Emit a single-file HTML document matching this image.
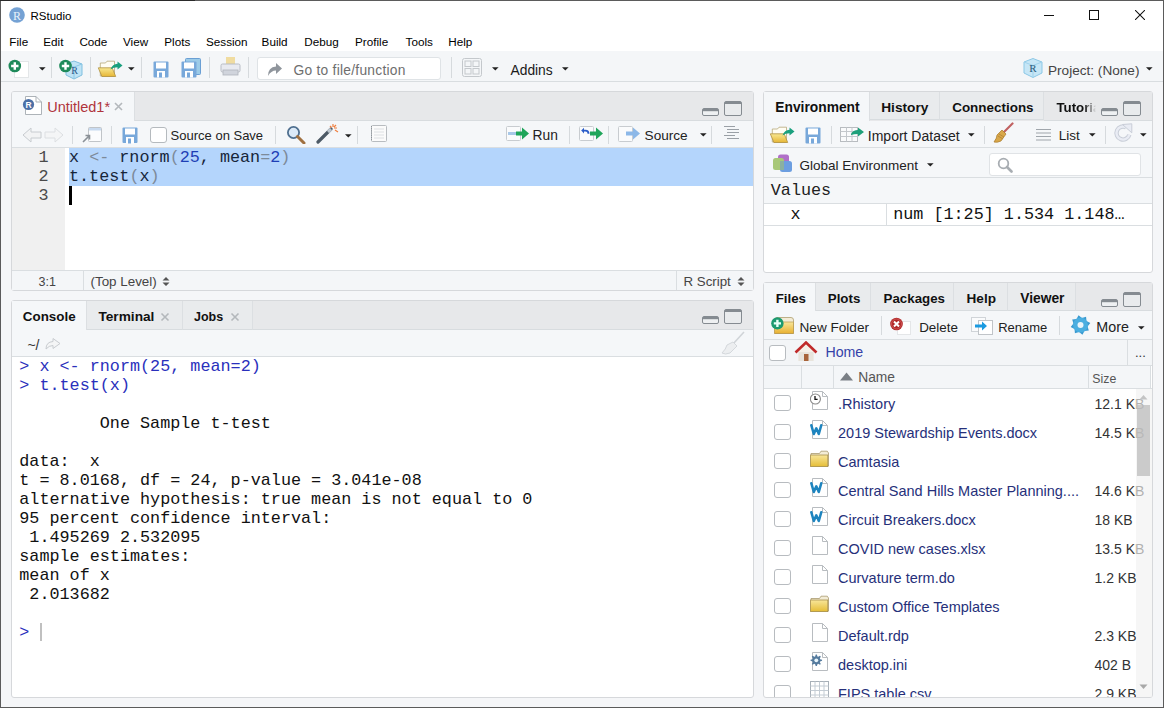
<!DOCTYPE html><html><head><meta charset="utf-8"><style>
*{margin:0;padding:0;box-sizing:border-box}
html,body{width:1164px;height:708px;overflow:hidden}
body{background:#5b5b5b;position:relative;font-family:"Liberation Sans",sans-serif}
.a{position:absolute}
.t{position:absolute;white-space:nowrap;line-height:1}
</style></head><body>
<div class="a" style="left:1px;top:1px;width:1162px;height:706px;background:#f5f6f8;"></div>
<div class="a" style="left:0px;top:0px;width:195px;height:1px;background:#2a2a2a;"></div>
<div class="a" style="left:1px;top:1px;width:1162px;height:50px;background:#ffffff;"></div>
<div class="a" style="left:1px;top:51px;width:1162px;height:30px;background:#f4f6f8;"></div>
<div class="a" style="left:1px;top:81px;width:1162px;height:1px;background:#d9dde0;"></div>
<svg class="a" style="left:9px;top:7px;" width="16" height="16" viewBox="0 0 16 16"><circle cx="8" cy="8" r="7.8" fill="#75a2d4"/><text x="8" y="12.5" font-family="Liberation Serif" font-size="12" fill="#e8f2fb" text-anchor="middle">R</text></svg>
<div class="t" style="left:30.5px;top:11.00px;font-size:11.5px;color:#000;font-weight:normal;font-family:'Liberation Sans';">RStudio</div>
<div class="a" style="left:1044px;top:15px;width:10px;height:1px;background:#111;"></div>
<div class="a" style="left:1089px;top:10px;width:10px;height:10px;border:1px solid #111"></div>
<svg class="a" style="left:1135px;top:10px;" width="10" height="10" viewBox="0 0 10 10"><path d="M0 0L10 10M10 0L0 10" stroke="#111" stroke-width="1.05"/></svg>
<div class="t" style="left:9.3px;top:36.00px;font-size:11.7px;color:#000;font-weight:normal;font-family:'Liberation Sans';">File</div>
<div class="t" style="left:43.3px;top:36.00px;font-size:11.7px;color:#000;font-weight:normal;font-family:'Liberation Sans';">Edit</div>
<div class="t" style="left:79.4px;top:36.00px;font-size:11.7px;color:#000;font-weight:normal;font-family:'Liberation Sans';">Code</div>
<div class="t" style="left:123px;top:36.00px;font-size:11.7px;color:#000;font-weight:normal;font-family:'Liberation Sans';">View</div>
<div class="t" style="left:164.3px;top:36.00px;font-size:11.7px;color:#000;font-weight:normal;font-family:'Liberation Sans';">Plots</div>
<div class="t" style="left:206px;top:36.00px;font-size:11.7px;color:#000;font-weight:normal;font-family:'Liberation Sans';">Session</div>
<div class="t" style="left:261.6px;top:36.00px;font-size:11.7px;color:#000;font-weight:normal;font-family:'Liberation Sans';">Build</div>
<div class="t" style="left:304.2px;top:36.00px;font-size:11.7px;color:#000;font-weight:normal;font-family:'Liberation Sans';">Debug</div>
<div class="t" style="left:355px;top:36.00px;font-size:11.7px;color:#000;font-weight:normal;font-family:'Liberation Sans';">Profile</div>
<div class="t" style="left:405.6px;top:36.00px;font-size:11.7px;color:#000;font-weight:normal;font-family:'Liberation Sans';">Tools</div>
<div class="t" style="left:448.2px;top:36.00px;font-size:11.7px;color:#000;font-weight:normal;font-family:'Liberation Sans';">Help</div>
<svg class="a" style="left:8px;top:58px;" width="24" height="22" viewBox="0 0 24 22"><rect x="6.5" y="3.5" width="14" height="16" fill="#fff" stroke="#e3e6e8"/><circle cx="6.8" cy="8" r="6.3" fill="#1e8a5a"/><path d="M6.8 4.3V11.7M3.1 8H10.5" stroke="#fff" stroke-width="2.4"/></svg>
<svg class="a" style="left:39px;top:67px;" width="7" height="4" viewBox="0 0 7 4"><path d="M0 0.2H6.6L3.3 3.6Z" fill="#222"/></svg>
<div class="a" style="left:51px;top:57px;width:1px;height:21px;background:#d6dadd;"></div>
<svg class="a" style="left:58px;top:57px;" width="26" height="24" viewBox="0 0 26 24"><path d="M8 7L16 4L24 7V18L16 22L8 18Z" fill="#bfe3f5" stroke="#7fbfdf" stroke-width="1"/><path d="M8 7L16 10L24 7M16 10V22" stroke="#8cc8e6" fill="none"/><text x="16.5" y="17" font-family="Liberation Serif" font-size="10" fill="#2a5a8a" text-anchor="middle">R</text><circle cx="7.5" cy="9" r="6.3" fill="#1e8a5a"/><path d="M7.5 5.3V12.7M3.8 9H11.2" stroke="#fff" stroke-width="2.4"/></svg>
<div class="a" style="left:90px;top:57px;width:1px;height:21px;background:#d6dadd;"></div>
<svg class="a" style="left:97px;top:58px;" width="27" height="21" viewBox="0 0 27 21"><defs><linearGradient id="ofg" x1="0" y1="0" x2="0" y2="1"><stop offset="0" stop-color="#f8e890"/><stop offset="1" stop-color="#e6b636"/></linearGradient></defs><path d="M3.3 18V5H8.5L10 3.2H17.5V18Z" fill="#fffdf3" stroke="#b8a878" stroke-width="0.8"/><path d="M1.3 9.8H15.2L18.7 18.5H4.9Z" fill="url(#ofg)" stroke="#b09040" stroke-width="0.8"/><path d="M13.5 11.5Q15.5 6 20.5 5.8V3.5L25.5 7.5L20.5 11.5V9.2Q16.5 9.2 13.5 11.5Z" fill="#1aa07e"/></svg>
<svg class="a" style="left:128px;top:67px;" width="7" height="4" viewBox="0 0 7 4"><path d="M0 0.2H6.6L3.3 3.6Z" fill="#222"/></svg>
<div class="a" style="left:141px;top:57px;width:1px;height:21px;background:#d6dadd;"></div>
<svg class="a" style="left:153px;top:61px;" width="17" height="18" viewBox="0 0 17 18"><rect x="0.5" y="0.5" width="15" height="16" rx="1" fill="#78a8da"/><rect x="3" y="1.5" width="10" height="6" fill="#fff"/><rect x="4" y="10" width="8" height="6.5" fill="#fff"/><rect x="6" y="11.5" width="3" height="5" fill="#78a8da"/></svg>
<svg class="a" style="left:181px;top:58px;" width="21" height="21" viewBox="0 0 21 21"><rect x="4.5" y="0.5" width="15" height="16" rx="1" fill="#9ccbe8" stroke="#6a9fd4"/><g transform="translate(0,3)"><rect x="0.5" y="0.5" width="15" height="16" rx="1" fill="#78a8da"/><rect x="3" y="1.5" width="10" height="6" fill="#fff"/><rect x="4" y="10" width="8" height="6.5" fill="#fff"/><rect x="6" y="11.5" width="3" height="5" fill="#78a8da"/></g></svg>
<div class="a" style="left:209px;top:57px;width:1px;height:21px;background:#d6dadd;"></div>
<svg class="a" style="left:220px;top:56px;" width="21" height="21" viewBox="0 0 21 21"><rect x="6" y="1" width="9" height="8" fill="#f0dca0"/><rect x="1" y="8" width="19" height="8" rx="1.5" fill="#e8eaf0" stroke="#b8bcc4"/><rect x="3" y="14" width="15" height="5" fill="#d0d4dc" stroke="#b0b4bc" stroke-width="0.8"/></svg>
<div class="a" style="left:248px;top:57px;width:1px;height:21px;background:#d6dadd;"></div>
<div class="a" style="left:257px;top:57px;width:184px;height:23px;background:#fff;border:1px solid #dfe3e6;border-radius:3px"></div>
<svg class="a" style="left:266px;top:61px;" width="18" height="16" viewBox="0 0 18 16"><path d="M2 15Q2 6 10 5.5V2L16 7.5L10 13V9.5Q5 9.5 2 15Z" fill="#8f959c"/></svg>
<div class="t" style="left:293.5px;top:64.00px;font-size:13.8px;color:#6e6e6e;font-weight:normal;font-family:'Liberation Sans';letter-spacing:0.25px">Go to file/function</div>
<div class="a" style="left:451px;top:57px;width:1px;height:21px;background:#d6dadd;"></div>
<svg class="a" style="left:462px;top:58px;" width="21" height="20" viewBox="0 0 21 20"><rect x="0.5" y="0.5" width="19" height="18" rx="2" fill="none" stroke="#c4c8cc"/><rect x="3" y="3" width="6" height="5.5" fill="none" stroke="#c4c8cc"/><rect x="11" y="3" width="6" height="5.5" fill="none" stroke="#c4c8cc"/><rect x="3" y="10.5" width="6" height="5.5" fill="none" stroke="#c4c8cc"/><rect x="11" y="10.5" width="6" height="5.5" fill="none" stroke="#c4c8cc"/></svg>
<svg class="a" style="left:492px;top:67px;" width="7" height="4" viewBox="0 0 7 4"><path d="M0 0.2H6.6L3.3 3.6Z" fill="#222"/></svg>
<div class="t" style="left:510.5px;top:64.00px;font-size:13.8px;color:#1a1a1a;font-weight:normal;font-family:'Liberation Sans';">Addins</div>
<svg class="a" style="left:562px;top:67px;" width="7" height="4" viewBox="0 0 7 4"><path d="M0 0.2H6.6L3.3 3.6Z" fill="#222"/></svg>
<svg class="a" style="left:1022px;top:57px;" width="22" height="22" viewBox="0 0 22 22"><path d="M2 5L11 1.5L20 5V16L11 20.5L2 16Z" fill="#c6e6f6" stroke="#8cc8e6"/><path d="M2 5L11 8.5L20 5M11 8.5V20.5" stroke="#9fd2ec" fill="none"/><text x="11" y="15" font-family="Liberation Serif" font-size="11" fill="#2a5a7a" text-anchor="middle">R</text></svg>
<div class="t" style="left:1048px;top:64.00px;font-size:13.6px;color:#444;font-weight:normal;font-family:'Liberation Sans';">Project: (None)</div>
<svg class="a" style="left:1146px;top:67px;" width="7" height="4" viewBox="0 0 7 4"><path d="M0 0.2H6.6L3.3 3.6Z" fill="#222"/></svg>
<div class="a" style="left:11px;top:91px;width:743px;height:200px;background:#fff;border:1px solid #d6d8db;border-radius:3px;overflow:hidden"></div>
<div class="a" style="left:12px;top:92px;width:741px;height:29px;background:#e7e8ea;"></div>
<div class="a" style="left:12px;top:121px;width:741px;height:26px;background:#f5f7f9;"></div>
<div class="a" style="left:12px;top:147px;width:741px;height:1px;background:#dadee1;"></div>
<div class="a" style="left:12px;top:92px;width:123px;height:29px;background:#f5f7f9;border-right:1px solid #dcdfe2;border-top-left-radius:2px"></div>
<svg class="a" style="left:22px;top:95px;" width="22" height="21" viewBox="0 0 22 21"><path d="M3.5 1.5H14L19.5 7V19.5H3.5Z" fill="#fff" stroke="#a4aab0" stroke-width="0.9"/><path d="M14 1.5V7H19.5" fill="none" stroke="#a4aab0" stroke-width="0.9"/><circle cx="6.5" cy="9.5" r="5.6" fill="#4b70a6"/><text x="6.5" y="12.6" font-family="Liberation Sans" font-weight="bold" font-size="8.5" fill="#fff" text-anchor="middle">R</text></svg>
<div class="t" style="left:47.2px;top:99.60px;font-size:14.5px;color:#b0343c;font-weight:normal;font-family:'Liberation Sans';">Untitled1*</div>
<svg class="a" style="left:114px;top:102px;" width="9" height="9" viewBox="0 0 9 9"><path d="M1 1L8 8M8 1L1 8" stroke="#b4b8bc" stroke-width="1.6"/></svg>
<svg class="a" style="left:702px;top:101px;" width="40" height="16" viewBox="0 0 40 16"><rect x="0.5" y="7.5" width="16" height="7" rx="1.5" fill="#eef0f2" stroke="#858b91"/><rect x="1" y="8" width="15" height="2.2" fill="#858b91"/><rect x="22.5" y="0.5" width="17" height="14" rx="1.5" fill="#e9ebed" stroke="#858b91"/><rect x="23" y="1" width="16" height="2" fill="#858b91"/></svg>
<div class="a" style="left:135px;top:120px;width:618px;height:1px;background:#d8dcdf;"></div>
<svg class="a" style="left:22px;top:126px;" width="42" height="18" viewBox="0 0 42 18"><path d="M1 9L9 2V6H19V12H9V16Z" fill="#f2f3f4" stroke="#c8ccd0"/><path d="M41 9L33 2V6H23V12H33V16Z" fill="#f4f5f6" stroke="#dcdfe2"/></svg>
<div class="a" style="left:72px;top:126px;width:1px;height:18px;background:#d6dadd;"></div>
<svg class="a" style="left:81px;top:126px;" width="22" height="18" viewBox="0 0 22 18"><rect x="7.5" y="1.5" width="13" height="14" rx="1" fill="#fbfcfd" stroke="#c0c4c8"/><rect x="8" y="2" width="12" height="2.5" fill="#c8daf0"/><path d="M2 16L8 10M4.5 9.5H8.5V13.5" stroke="#8a9096" stroke-width="1.6" fill="none"/></svg>
<div class="a" style="left:111px;top:126px;width:1px;height:18px;background:#d6dadd;"></div>
<svg class="a" style="left:122px;top:127px;" width="17" height="18" viewBox="0 0 17 18"><rect x="0.5" y="0.5" width="15" height="15.5" rx="1" fill="#78a8da"/><rect x="3" y="1.5" width="10" height="6" fill="#fff"/><rect x="4" y="10" width="8" height="6.5" fill="#fff"/><rect x="6" y="11.5" width="3" height="5" fill="#78a8da"/></svg>
<div class="a" style="left:150px;top:127px;width:17px;height:16px;background:#fff;border:1px solid #b5babe;border-radius:3px"></div>
<div class="t" style="left:170.6px;top:129.00px;font-size:13.0px;color:#222;font-weight:normal;font-family:'Liberation Sans';">Source on Save</div>
<div class="a" style="left:275px;top:126px;width:1px;height:18px;background:#d6dadd;"></div>
<svg class="a" style="left:286px;top:125px;" width="20" height="19" viewBox="0 0 20 19"><circle cx="7.5" cy="7.5" r="5.6" fill="#dbe9f7" stroke="#4f6f8f" stroke-width="1.8"/><path d="M11.5 11.5L18 18" stroke="#a07040" stroke-width="3" stroke-linecap="round"/></svg>
<svg class="a" style="left:316px;top:123px;" width="24" height="21" viewBox="0 0 24 21"><path d="M2 19L15 6" stroke="#4d5a66" stroke-width="3.2" stroke-linecap="round"/><path d="M12 9L15 6" stroke="#c0c8d0" stroke-width="3.2"/><path d="M17 1V4M21 5H18M20 2L18 4M14 3L15.5 4.5M22 9L19 7" stroke="#f08040" stroke-width="1.2"/></svg>
<svg class="a" style="left:345px;top:134px;" width="7" height="4" viewBox="0 0 7 4"><path d="M0 0.2H6.6L3.3 3.6Z" fill="#222"/></svg>
<div class="a" style="left:357px;top:126px;width:1px;height:18px;background:#d6dadd;"></div>
<svg class="a" style="left:369px;top:125px;" width="19" height="18" viewBox="0 0 19 18"><rect x="2.5" y="0.5" width="15" height="16" rx="1" fill="#fbfbfb" stroke="#b8bcc0"/><path d="M5 4H15M5 7H15M5 10H15M5 13H15" stroke="#dde0e3"/><path d="M2.5 1V16" stroke="#8a9096" stroke-dasharray="1 1.2"/></svg>
<svg class="a" style="left:506px;top:126px;" width="24" height="16" viewBox="0 0 24 16"><rect x="0.5" y="0.5" width="14" height="14" rx="1" fill="#fafbfc" stroke="#c8ccd0"/><rect x="2" y="6" width="10" height="3" fill="#a8c8e8"/><path d="M10 5.5H16V1.5L23 7.5L16 13.5V9.5H10Z" fill="#1fa55a"/></svg>
<div class="t" style="left:532.6px;top:129.20px;font-size:13.8px;color:#222;font-weight:normal;font-family:'Liberation Sans';">Run</div>
<div class="a" style="left:569px;top:126px;width:1px;height:18px;background:#d6dadd;"></div>
<svg class="a" style="left:579px;top:126px;" width="25" height="16" viewBox="0 0 25 16"><rect x="0.5" y="0.5" width="14" height="14" rx="1" fill="#fafbfc" stroke="#c8ccd0"/><path d="M5 1.8L2.2 4.6L5 7.4Z" fill="#2a5cc8"/><path d="M4 4.6H6.5Q9.5 4.6 9.5 7.8" stroke="#2a5cc8" stroke-width="1.9" fill="none"/><path d="M11 5.5H17V1.5L24 7.5L17 13.5V9.5H11Z" fill="#1fa55a"/></svg>
<div class="a" style="left:608px;top:126px;width:1px;height:18px;background:#d6dadd;"></div>
<svg class="a" style="left:618px;top:126px;" width="24" height="17" viewBox="0 0 24 17"><rect x="0.5" y="0.5" width="14" height="15" rx="1" fill="#fafbfc" stroke="#c8ccd0"/><path d="M8 5.5H15V1.5L22 7.5L15 13.5V9.5H8Z" fill="#8cb8e8"/></svg>
<div class="t" style="left:644.6px;top:129.20px;font-size:13.6px;color:#222;font-weight:normal;font-family:'Liberation Sans';">Source</div>
<svg class="a" style="left:700px;top:133px;" width="7" height="4" viewBox="0 0 7 4"><path d="M0 0.2H6.6L3.3 3.6Z" fill="#222"/></svg>
<div class="a" style="left:711px;top:126px;width:1px;height:18px;background:#d6dadd;"></div>
<svg class="a" style="left:723px;top:125px;" width="18" height="14" viewBox="0 0 18 14"><path d="M1 1.5H12M4 4.5H16M4 7.5H16M1 10.5H12M4 13.5H16" stroke="#9aa0a6" stroke-width="1"/></svg>
<div class="a" style="left:12px;top:148px;width:53px;height:122px;background:#f0f0f0;"></div>
<div class="a" style="left:69px;top:148px;width:684px;height:38px;background:#b4d5fc;"></div>
<div class="a" style="left:69px;top:186px;width:3px;height:19px;background:#000;"></div>
<div class="t" style="left:38.5px;top:150.30px;font-size:16.77px;color:#4a4a4a;font-weight:normal;font-family:'Liberation Mono';">1</div>
<div class="t" style="left:38.5px;top:169.30px;font-size:16.77px;color:#4a4a4a;font-weight:normal;font-family:'Liberation Mono';">2</div>
<div class="t" style="left:38.5px;top:188.30px;font-size:16.77px;color:#4a4a4a;font-weight:normal;font-family:'Liberation Mono';">3</div>
<div class="t" style="left:69px;top:150.30px;font-size:16.77px;color:#000;font-weight:normal;font-family:'Liberation Mono';"><span style="color:#17263a">x </span><span style="color:#7d8a99">&lt;-</span><span style="color:#17263a"> rnorm</span><span style="color:#7d8a99">(</span><span style="color:#1f3fb5">25</span><span style="color:#17263a">, mean</span><span style="color:#7d8a99">=</span><span style="color:#1f3fb5">2</span><span style="color:#7d8a99">)</span></div>
<div class="t" style="left:69px;top:169.30px;font-size:16.77px;color:#000;font-weight:normal;font-family:'Liberation Mono';"><span style="color:#17263a">t.test</span><span style="color:#7d8a99">(</span><span style="color:#17263a">x</span><span style="color:#7d8a99">)</span></div>
<div class="a" style="left:12px;top:270px;width:741px;height:20px;background:#f4f6f8;"></div>
<div class="a" style="left:12px;top:270px;width:741px;height:1px;background:#dadee1;"></div>
<div class="t" style="left:38.6px;top:275.70px;font-size:12.5px;color:#444;font-weight:normal;font-family:'Liberation Sans';">3:1</div>
<div class="a" style="left:83px;top:271px;width:1px;height:19px;background:#dadee1;"></div>
<div class="t" style="left:90.5px;top:274.70px;font-size:13.4px;color:#444;font-weight:normal;font-family:'Liberation Sans';">(Top Level)</div>
<svg class="a" style="left:162px;top:276px;" width="8" height="11" viewBox="0 0 8 11"><path d="M0.5 4.5L4 1L7.5 4.5ZM0.5 6.5L4 10L7.5 6.5Z" fill="#555"/></svg>
<div class="a" style="left:676px;top:271px;width:1px;height:19px;background:#dadee1;"></div>
<div class="t" style="left:683.5px;top:274.70px;font-size:13.3px;color:#444;font-weight:normal;font-family:'Liberation Sans';">R Script</div>
<svg class="a" style="left:737px;top:276px;" width="8" height="11" viewBox="0 0 8 11"><path d="M0.5 4.5L4 1L7.5 4.5ZM0.5 6.5L4 10L7.5 6.5Z" fill="#555"/></svg>
<div class="a" style="left:11px;top:300px;width:743px;height:398px;background:#fff;border:1px solid #d6d8db;border-radius:3px;overflow:hidden"></div>
<div class="a" style="left:12px;top:301px;width:741px;height:29px;background:#e7e8ea;"></div>
<div class="a" style="left:12px;top:330px;width:741px;height:26px;background:#f5f7f9;"></div>
<div class="a" style="left:12px;top:356px;width:741px;height:1px;background:#dadee1;"></div>
<div class="a" style="left:12px;top:301px;width:75px;height:29px;background:#f5f7f9;border-right:1px solid #dcdfe2"></div>
<div class="a" style="left:87px;top:301px;width:96px;height:29px;background:#e9ebed;border-right:1px solid #dcdfe2;border-bottom:1px solid #d8dcdf"></div>
<div class="a" style="left:183px;top:301px;width:70px;height:29px;background:#e9ebed;border-right:1px solid #dcdfe2;border-bottom:1px solid #d8dcdf"></div>
<div class="a" style="left:253px;top:329px;width:500px;height:1px;background:#d8dcdf;"></div>
<div class="t" style="left:22.8px;top:309.80px;font-size:13.4px;color:#111;font-weight:bold;font-family:'Liberation Sans';">Console</div>
<div class="t" style="left:98.4px;top:309.80px;font-size:13.7px;color:#111;font-weight:bold;font-family:'Liberation Sans';">Terminal</div>
<svg class="a" style="left:160px;top:312px;" width="10" height="10" viewBox="0 0 10 10"><path d="M1.5 1.5L8.5 8.5M8.5 1.5L1.5 8.5" stroke="#b4b8bc" stroke-width="1.6"/></svg>
<div class="t" style="left:194px;top:310.80px;font-size:12.5px;color:#111;font-weight:bold;font-family:'Liberation Sans';">Jobs</div>
<svg class="a" style="left:229.5px;top:312px;" width="10" height="10" viewBox="0 0 10 10"><path d="M1.5 1.5L8.5 8.5M8.5 1.5L1.5 8.5" stroke="#b4b8bc" stroke-width="1.6"/></svg>
<svg class="a" style="left:702px;top:309px;" width="40" height="16" viewBox="0 0 40 16"><rect x="0.5" y="7.5" width="16" height="7" rx="1.5" fill="#eef0f2" stroke="#858b91"/><rect x="1" y="8" width="15" height="2.2" fill="#858b91"/><rect x="22.5" y="0.5" width="17" height="14" rx="1.5" fill="#e9ebed" stroke="#858b91"/><rect x="23" y="1" width="16" height="2" fill="#858b91"/></svg>
<div class="t" style="left:27.5px;top:337.50px;font-size:14px;color:#333;font-weight:normal;font-family:'Liberation Sans';">~</div>
<div class="t" style="left:35.6px;top:337.50px;font-size:14px;color:#333;font-weight:normal;font-family:'Liberation Sans';">/</div>
<svg class="a" style="left:45px;top:337px;" width="17" height="13" viewBox="0 0 17 13"><path d="M1 12Q1 5 8 4.5V1.5L15 6.5L8 11.5V8.5Q4 8.5 1 12Z" fill="#f4f5f6" stroke="#c8ccd0"/></svg>
<svg class="a" style="left:720px;top:331px;" width="26" height="24" viewBox="0 0 26 24"><path d="M24 1L13 13" stroke="#d0d4d8" stroke-width="1.6"/><path d="M13 11L17 15L10 22Q5 24 2 22Q6 18 7 14Z" fill="#eceef0" stroke="#d4d8dc"/></svg>
<div class="t" style="left:19.3px;top:359.30px;font-size:16.77px;color:#111;font-weight:normal;font-family:'Liberation Mono';"><span style="color:#2a30bc">&gt;&nbsp;x&nbsp;&lt;-&nbsp;rnorm(25,&nbsp;mean=2)</span></div>
<div class="t" style="left:19.3px;top:378.30px;font-size:16.77px;color:#111;font-weight:normal;font-family:'Liberation Mono';"><span style="color:#2a30bc">&gt;&nbsp;t.test(x)</span></div>
<div class="t" style="left:19.3px;top:416.30px;font-size:16.77px;color:#111;font-weight:normal;font-family:'Liberation Mono';">&nbsp;&nbsp;&nbsp;&nbsp;&nbsp;&nbsp;&nbsp;&nbsp;One&nbsp;Sample&nbsp;t-test</div>
<div class="t" style="left:19.3px;top:454.30px;font-size:16.77px;color:#111;font-weight:normal;font-family:'Liberation Mono';">data:&nbsp;&nbsp;x</div>
<div class="t" style="left:19.3px;top:473.30px;font-size:16.77px;color:#111;font-weight:normal;font-family:'Liberation Mono';">t&nbsp;=&nbsp;8.0168,&nbsp;df&nbsp;=&nbsp;24,&nbsp;p-value&nbsp;=&nbsp;3.041e-08</div>
<div class="t" style="left:19.3px;top:492.30px;font-size:16.77px;color:#111;font-weight:normal;font-family:'Liberation Mono';">alternative&nbsp;hypothesis:&nbsp;true&nbsp;mean&nbsp;is&nbsp;not&nbsp;equal&nbsp;to&nbsp;0</div>
<div class="t" style="left:19.3px;top:511.30px;font-size:16.77px;color:#111;font-weight:normal;font-family:'Liberation Mono';">95&nbsp;percent&nbsp;confidence&nbsp;interval:</div>
<div class="t" style="left:19.3px;top:530.30px;font-size:16.77px;color:#111;font-weight:normal;font-family:'Liberation Mono';">&nbsp;1.495269&nbsp;2.532095</div>
<div class="t" style="left:19.3px;top:549.30px;font-size:16.77px;color:#111;font-weight:normal;font-family:'Liberation Mono';">sample&nbsp;estimates:</div>
<div class="t" style="left:19.3px;top:568.30px;font-size:16.77px;color:#111;font-weight:normal;font-family:'Liberation Mono';">mean&nbsp;of&nbsp;x</div>
<div class="t" style="left:19.3px;top:587.30px;font-size:16.77px;color:#111;font-weight:normal;font-family:'Liberation Mono';">&nbsp;2.013682</div>
<div class="t" style="left:19.3px;top:625.30px;font-size:16.77px;color:#111;font-weight:normal;font-family:'Liberation Mono';"><span style="color:#2a30bc">&gt;&nbsp;</span></div>
<div class="a" style="left:40px;top:623px;width:2px;height:18px;background:#c0c0c0;"></div>
<div class="a" style="left:763px;top:91px;width:390px;height:182px;background:#fff;border:1px solid #d6d8db;border-radius:3px;overflow:hidden"></div>
<div class="a" style="left:764px;top:92px;width:388px;height:29px;background:#e7e8ea;"></div>
<div class="a" style="left:764px;top:121px;width:388px;height:27px;background:#f5f7f9;"></div>
<div class="a" style="left:764px;top:147px;width:388px;height:1px;background:#dadee1;"></div>
<div class="a" style="left:764px;top:148px;width:388px;height:29px;background:#f5f7f9;"></div>
<div class="a" style="left:764px;top:177px;width:388px;height:1px;background:#dadee1;"></div>
<div class="a" style="left:764px;top:178px;width:388px;height:25px;background:#f5f7f9;"></div>
<div class="a" style="left:764px;top:203px;width:388px;height:1px;background:#dadee1;"></div>
<div class="a" style="left:764px;top:225px;width:388px;height:1px;background:#dadee1;"></div>
<div class="a" style="left:886px;top:204px;width:1px;height:21px;background:#dadee1;"></div>
<div class="a" style="left:764px;top:92px;width:106px;height:29px;background:#f5f7f9;border-right:1px solid #dcdfe2"></div>
<div class="a" style="left:870px;top:92px;width:70px;height:28px;background:#e9ebed;border-right:1px solid #dcdfe2;border-bottom:1px solid #d8dcdf"></div>
<div class="a" style="left:940px;top:92px;width:104px;height:28px;background:#e9ebed;border-right:1px solid #dcdfe2;border-bottom:1px solid #d8dcdf"></div>
<div class="a" style="left:1044px;top:120px;width:108px;height:1px;background:#d8dcdf;"></div>
<div class="t" style="left:775.3px;top:101.00px;font-size:13.8px;color:#111;font-weight:bold;font-family:'Liberation Sans';">Environment</div>
<div class="t" style="left:881.2px;top:101.00px;font-size:13.7px;color:#111;font-weight:bold;font-family:'Liberation Sans';">History</div>
<div class="t" style="left:952.2px;top:101.00px;font-size:13.45px;color:#111;font-weight:bold;font-family:'Liberation Sans';">Connections</div>
<div class="t" style="left:1056.4px;top:100.74px;font-size:13.3px;font-weight:bold;color:#111;width:40px;overflow:hidden;-webkit-mask-image:linear-gradient(90deg,#000 70%,transparent 100%)">Tutorials</div>
<svg class="a" style="left:1101px;top:101px;" width="40" height="16" viewBox="0 0 40 16"><rect x="0.5" y="7.5" width="16" height="7" rx="1.5" fill="#eef0f2" stroke="#858b91"/><rect x="1" y="8" width="15" height="2.2" fill="#858b91"/><rect x="22.5" y="0.5" width="17" height="14" rx="1.5" fill="#e9ebed" stroke="#858b91"/><rect x="23" y="1" width="16" height="2" fill="#858b91"/></svg>
<svg class="a" style="left:769px;top:124px;" width="27" height="21" viewBox="0 0 27 21"><defs><linearGradient id="ofg2" x1="0" y1="0" x2="0" y2="1"><stop offset="0" stop-color="#f8e890"/><stop offset="1" stop-color="#e6b636"/></linearGradient></defs><path d="M3.3 18V5H8.5L10 3.2H17.5V18Z" fill="#fffdf3" stroke="#b8a878" stroke-width="0.8"/><path d="M1.3 9.8H15.2L18.7 18.5H4.9Z" fill="url(#ofg2)" stroke="#b09040" stroke-width="0.8"/><path d="M13.5 11.5Q15.5 6 20.5 5.8V3.5L25.5 7.5L20.5 11.5V9.2Q16.5 9.2 13.5 11.5Z" fill="#1aa07e"/></svg>
<svg class="a" style="left:805px;top:127px;" width="17" height="18" viewBox="0 0 17 18"><rect x="0.5" y="0.5" width="15" height="16" rx="1" fill="#78a8da"/><rect x="3" y="1.5" width="10" height="6" fill="#fff"/><rect x="4" y="10" width="8" height="6.5" fill="#fff"/><rect x="6" y="11.5" width="3" height="5" fill="#78a8da"/></svg>
<div class="a" style="left:831px;top:126px;width:1px;height:18px;background:#d6dadd;"></div>
<svg class="a" style="left:840px;top:127px;" width="26" height="16" viewBox="0 0 26 16"><rect x="0.5" y="0.5" width="17" height="14" fill="#fafbfc" stroke="#b8bcc0"/><path d="M0.5 4.5H17.5M0.5 9.5H17.5M6.5 0.5V14.5M12 0.5V14.5" stroke="#c4c8cc"/><path d="M11 7Q13 3 18 3V0.5L24 5L18 9.5V7Q14 7 11 8Z" fill="#1ea07a"/></svg>
<div class="t" style="left:867.8px;top:128.55px;font-size:14.0px;color:#222;font-weight:normal;font-family:'Liberation Sans';">Import Dataset</div>
<svg class="a" style="left:968px;top:133px;" width="7" height="4" viewBox="0 0 7 4"><path d="M0 0.2H6.6L3.3 3.6Z" fill="#222"/></svg>
<div class="a" style="left:984px;top:126px;width:1px;height:18px;background:#d6dadd;"></div>
<svg class="a" style="left:993px;top:122px;" width="21" height="21" viewBox="0 0 21 21"><path d="M19.5 1.5L11 10" stroke="#c06060" stroke-width="2.2" stroke-linecap="round"/><path d="M9 8L13 12L8 19Q4 21 1 20Q4 16 4 13Z" fill="#d9a84a" stroke="#a8782a" stroke-width="0.7"/><path d="M5 14L10 17M6 12L11 15" stroke="#a8782a" stroke-width="0.6"/></svg>
<svg class="a" style="left:1036px;top:128px;" width="16" height="14" viewBox="0 0 16 14"><path d="M0 1.5H15M0 5H15M0 8.5H15M0 12H15" stroke="#a0a6ac" stroke-width="1.1"/></svg>
<div class="t" style="left:1058.8px;top:129.40px;font-size:13.5px;color:#222;font-weight:normal;font-family:'Liberation Sans';">List</div>
<svg class="a" style="left:1089px;top:133px;" width="7" height="4" viewBox="0 0 7 4"><path d="M0 0.2H6.6L3.3 3.6Z" fill="#222"/></svg>
<div class="a" style="left:1105px;top:126px;width:1px;height:18px;background:#d6dadd;"></div>
<svg class="a" style="left:1113px;top:122px;" width="21" height="22" viewBox="0 0 21 22"><path d="M16.3 12.7A6.5 6.5 0 1 1 13.2 5.4" fill="none" stroke="#c9ced8" stroke-width="4.4"/><path d="M16.3 12.7A6.5 6.5 0 1 1 13.2 5.4" fill="none" stroke="#e9ecf4" stroke-width="2.4"/><path d="M9.5 2.5L18.8 1.8L18.8 10.8Z" fill="#e9ecf4" stroke="#c9ced8" stroke-width="1"/></svg>
<svg class="a" style="left:1140px;top:133px;" width="7" height="4" viewBox="0 0 7 4"><path d="M0 0.2H6.6L3.3 3.6Z" fill="#222"/></svg>
<svg class="a" style="left:772px;top:154px;" width="22" height="19" viewBox="0 0 22 19"><rect x="6" y="0.5" width="11" height="11" rx="2.5" fill="#b070c8"/><rect x="1" y="4" width="11" height="12" rx="2.5" fill="#a8c878"/><rect x="8" y="7" width="12" height="11" rx="2.5" fill="#6c9ee0"/><rect x="8" y="7" width="4" height="9" fill="#8ab0a0"/></svg>
<div class="t" style="left:799.5px;top:159.00px;font-size:13.5px;color:#222;font-weight:normal;font-family:'Liberation Sans';">Global Environment</div>
<svg class="a" style="left:927px;top:163px;" width="7" height="4" viewBox="0 0 7 4"><path d="M0 0.2H6.6L3.3 3.6Z" fill="#222"/></svg>
<div class="a" style="left:989px;top:153px;width:152px;height:23px;background:#fff;border:1px solid #e0e3e6;border-radius:3px"></div>
<svg class="a" style="left:997px;top:157px;" width="18" height="16" viewBox="0 0 18 16"><circle cx="6.5" cy="6.5" r="4.8" fill="none" stroke="#a8adb2" stroke-width="1.8"/><path d="M10 10L14.5 14.5" stroke="#a8adb2" stroke-width="2.6" stroke-linecap="round"/></svg>
<div class="t" style="left:770.8px;top:182.80px;font-size:16.77px;color:#222;font-weight:normal;font-family:'Liberation Mono';">Values</div>
<div class="t" style="left:790.5px;top:207.00px;font-size:16.77px;color:#111;font-weight:normal;font-family:'Liberation Mono';">x</div>
<div class="t" style="left:893.2px;top:207.00px;font-size:16.77px;color:#111;font-weight:normal;font-family:'Liberation Mono';">num&nbsp;[1:25]&nbsp;1.534&nbsp;1.148…</div>
<div class="a" style="left:763px;top:282px;width:390px;height:416px;background:#fff;border:1px solid #d6d8db;border-radius:3px;overflow:hidden"></div>
<div class="a" style="left:764px;top:283px;width:388px;height:28px;background:#e7e8ea;"></div>
<div class="a" style="left:764px;top:311px;width:388px;height:28px;background:#f5f7f9;"></div>
<div class="a" style="left:764px;top:339px;width:388px;height:1px;background:#dadee1;"></div>
<div class="a" style="left:764px;top:340px;width:388px;height:25px;background:#f3f5f7;"></div>
<div class="a" style="left:764px;top:365px;width:388px;height:1px;background:#dadee1;"></div>
<div class="a" style="left:764px;top:366px;width:387px;height:22px;background:#f4f6f8;"></div>
<div class="a" style="left:764px;top:388px;width:388px;height:1px;background:#dadee1;"></div>
<div class="a" style="left:1127px;top:340px;width:1px;height:25px;background:#dadee1;"></div>
<div class="a" style="left:801px;top:366px;width:1px;height:22px;background:#dadee1;"></div>
<div class="a" style="left:833px;top:366px;width:1px;height:22px;background:#dadee1;"></div>
<div class="a" style="left:1088px;top:366px;width:1px;height:22px;background:#dadee1;"></div>
<div class="a" style="left:1150px;top:366px;width:1px;height:22px;background:#dadee1;"></div>
<div class="a" style="left:764px;top:283px;width:52px;height:28px;background:#f5f7f9;border-right:1px solid #dcdfe2"></div>
<div class="a" style="left:816px;top:283px;width:55px;height:28px;background:#e9ebed;border-right:1px solid #dcdfe2;border-bottom:1px solid #d8dcdf"></div>
<div class="a" style="left:871px;top:283px;width:83px;height:28px;background:#e9ebed;border-right:1px solid #dcdfe2;border-bottom:1px solid #d8dcdf"></div>
<div class="a" style="left:954px;top:283px;width:54px;height:28px;background:#e9ebed;border-right:1px solid #dcdfe2;border-bottom:1px solid #d8dcdf"></div>
<div class="a" style="left:1008px;top:283px;width:68px;height:28px;background:#e9ebed;border-right:1px solid #dcdfe2;border-bottom:1px solid #d8dcdf"></div>
<div class="a" style="left:1076px;top:310px;width:76px;height:1px;background:#d8dcdf;"></div>
<div class="t" style="left:775.7px;top:291.70px;font-size:13.3px;color:#111;font-weight:bold;font-family:'Liberation Sans';">Files</div>
<div class="t" style="left:827.8px;top:291.70px;font-size:13.3px;color:#111;font-weight:bold;font-family:'Liberation Sans';">Plots</div>
<div class="t" style="left:883.6px;top:291.70px;font-size:13.3px;color:#111;font-weight:bold;font-family:'Liberation Sans';">Packages</div>
<div class="t" style="left:966.5px;top:291.70px;font-size:13.6px;color:#111;font-weight:bold;font-family:'Liberation Sans';">Help</div>
<div class="t" style="left:1020.2px;top:291.70px;font-size:13.8px;color:#111;font-weight:bold;font-family:'Liberation Sans';">Viewer</div>
<svg class="a" style="left:1101px;top:292px;" width="40" height="16" viewBox="0 0 40 16"><rect x="0.5" y="7.5" width="16" height="7" rx="1.5" fill="#eef0f2" stroke="#858b91"/><rect x="1" y="8" width="15" height="2.2" fill="#858b91"/><rect x="22.5" y="0.5" width="17" height="14" rx="1.5" fill="#e9ebed" stroke="#858b91"/><rect x="23" y="1" width="16" height="2" fill="#858b91"/></svg>
<svg class="a" style="left:770px;top:316px;" width="25" height="19" viewBox="0 0 25 19"><defs><linearGradient id="nfg" x1="0" y1="0" x2="0" y2="1"><stop offset="0" stop-color="#f8e69a"/><stop offset="1" stop-color="#e8b030"/></linearGradient></defs><path d="M5 3.5Q5 1.5 7 1.5H21Q23.5 1.5 23.5 4V17.5H5Z" fill="#f3ecd6" stroke="#b0a070" stroke-width="0.8"/><rect x="4.5" y="6" width="19" height="11.5" fill="url(#nfg)" stroke="#b8984c" stroke-width="0.7"/><circle cx="7.4" cy="7.4" r="6.2" fill="#1c9a70"/><path d="M7.4 3.8V11M3.8 7.4H11" stroke="#e8fff8" stroke-width="2.4"/></svg>
<div class="t" style="left:799.5px;top:320.50px;font-size:13.6px;color:#222;font-weight:normal;font-family:'Liberation Sans';">New Folder</div>
<div class="a" style="left:881px;top:316px;width:1px;height:19px;background:#d6dadd;"></div>
<svg class="a" style="left:889px;top:317px;" width="23" height="18" viewBox="0 0 23 18"><rect x="8.5" y="4.5" width="13" height="13" fill="#fff" stroke="#e4e6e8"/><circle cx="7.5" cy="7" r="6.3" fill="#b02828"/><circle cx="7.5" cy="7" r="5" fill="none" stroke="#e07070" stroke-width="0.6"/><path d="M5 4.5L10 9.5M10 4.5L5 9.5" stroke="#fff" stroke-width="2"/></svg>
<div class="t" style="left:919.2px;top:320.70px;font-size:13.4px;color:#222;font-weight:normal;font-family:'Liberation Sans';">Delete</div>
<svg class="a" style="left:971px;top:317px;" width="23" height="18" viewBox="0 0 23 18"><rect x="0.5" y="0.5" width="14" height="14" fill="#fafbfc" stroke="#d0d4d8"/><rect x="7.5" y="3.5" width="14" height="14" fill="#fff" stroke="#c0c4c8"/><path d="M4 7.5H11V4.5L16 9L11 13.5V10.5H4Z" fill="#1a9ae0"/></svg>
<div class="t" style="left:998.2px;top:320.70px;font-size:13.0px;color:#222;font-weight:normal;font-family:'Liberation Sans';">Rename</div>
<div class="a" style="left:1059px;top:316px;width:1px;height:19px;background:#d6dadd;"></div>
<svg class="a" style="left:1070px;top:315px;" width="21" height="21" viewBox="0 0 21 21"><polygon points="20.31,8.05 17.56,11.40 18.81,15.56 14.50,15.99 12.45,19.81 9.10,17.06 4.94,18.31 4.51,14.00 0.69,11.95 3.44,8.60 2.19,4.44 6.50,4.01 8.55,0.19 11.90,2.94 16.06,1.69 16.49,6.00" fill="#3a9ad0"/><circle cx="10.5" cy="10" r="7.5" fill="#4aaee0"/><circle cx="10.5" cy="10" r="3" fill="#e8f4fa"/></svg>
<div class="t" style="left:1096.3px;top:319.70px;font-size:14.3px;color:#222;font-weight:normal;font-family:'Liberation Sans';">More</div>
<svg class="a" style="left:1137.5px;top:325.5px;" width="7" height="4" viewBox="0 0 7 4"><path d="M0 0.2H6.6L3.3 3.6Z" fill="#222"/></svg>
<div class="a" style="left:769px;top:345px;width:17px;height:16px;background:#fff;border:1px solid #b8bcc0;border-radius:3px"></div>
<svg class="a" style="left:794px;top:341px;" width="24" height="21" viewBox="0 0 24 21"><path d="M12 1.5L1.5 11.5H4.5V20H19.5V11.5H22.5Z" fill="#f4f0e8"/><path d="M1.5 11.5L12 1.5L22.5 11.5" fill="none" stroke="#c02a2a" stroke-width="2.6" stroke-linejoin="miter"/><rect x="4.5" y="11" width="15" height="9" fill="#e8e4dc"/><rect x="10" y="13" width="4.5" height="7" fill="#a8643a"/></svg>
<div class="t" style="left:825.4px;top:344.50px;font-size:14.2px;color:#3442a8;font-weight:normal;font-family:'Liberation Sans';">Home</div>
<div class="t" style="left:1135px;top:346.00px;font-size:13px;color:#333;font-weight:normal;font-family:'Liberation Sans';">...</div>
<svg class="a" style="left:840px;top:372px;" width="13" height="9" viewBox="0 0 13 9"><path d="M0 8.5L6.5 0.5L13 8.5Z" fill="#7a7f85"/></svg>
<div class="t" style="left:858.2px;top:371.20px;font-size:13.8px;color:#555;font-weight:normal;font-family:'Liberation Sans';">Name</div>
<div class="t" style="left:1092.3px;top:372.50px;font-size:12.3px;color:#555;font-weight:normal;font-family:'Liberation Sans';">Size</div>
<div class="a" style="left:764px;top:389px;width:388px;height:308px;overflow:hidden">
<div class="a" style="left:10px;top:6px;width:17px;height:16px;background:#fff;border:1px solid #b8bcc0;border-radius:3px"></div>
<svg class="a" style="left:46px;top:2px;" width="20" height="20" viewBox="0 0 20 20"><path d="M2.5 0.5H12.5L17.5 5.5V18.5H2.5Z" fill="#fff" stroke="#b8bcc0"/><path d="M12.5 0.5V5.5H17.5" fill="none" stroke="#b8bcc0"/><circle cx="5.4" cy="8" r="5" fill="#fff" stroke="#8a8a8a" stroke-width="1.1"/><path d="M5 5V8.4H7.6" stroke="#111" stroke-width="1.3" fill="none"/></svg>
<div class="t" style="left:74.0px;top:7.60px;font-size:14.5px;color:#26307a;font-weight:normal;font-family:'Liberation Sans';">.Rhistory</div>
<div class="t" style="left:330.5px;top:7.75px;font-size:14.0px;color:#333;font-weight:normal;font-family:'Liberation Sans';">12.1 KB</div>
<div class="a" style="left:10px;top:35px;width:17px;height:16px;background:#fff;border:1px solid #b8bcc0;border-radius:3px"></div>
<svg class="a" style="left:46px;top:31px;" width="20" height="20" viewBox="0 0 20 20"><path d="M2.5 0.5H12.5L17.5 5.5V18.5H2.5Z" fill="#fff" stroke="#b8bcc0"/><path d="M12.5 0.5V5.5H17.5" fill="none" stroke="#b8bcc0"/><path d="M1.3 5.2L3.8 14L6.3 8.3L8.8 14L11.3 5.2" fill="none" stroke="#1d84bf" stroke-width="2.5" stroke-linejoin="round" stroke-linecap="round"/></svg>
<div class="t" style="left:74.0px;top:36.60px;font-size:14.5px;color:#26307a;font-weight:normal;font-family:'Liberation Sans';">2019 Stewardship Events.docx</div>
<div class="t" style="left:330.5px;top:36.75px;font-size:14.0px;color:#333;font-weight:normal;font-family:'Liberation Sans';">14.5 KB</div>
<div class="a" style="left:10px;top:64px;width:17px;height:16px;background:#fff;border:1px solid #b8bcc0;border-radius:3px"></div>
<svg class="a" style="left:46px;top:61px;" width="20" height="18" viewBox="0 0 20 18"><defs><linearGradient id="fg1" x1="0" y1="0" x2="0" y2="1"><stop offset="0" stop-color="#f8e69a"/><stop offset="1" stop-color="#e5bd36"/></linearGradient></defs><path d="M1 3.5H9.5L11 1.2H17.3L18.5 3V16H1Z" fill="#f3ecd6" stroke="#a99a70" stroke-width="0.8"/><rect x="0.6" y="5" width="17.2" height="11.6" fill="url(#fg1)" stroke="#a8904c" stroke-width="0.8"/></svg>
<div class="t" style="left:74.0px;top:65.60px;font-size:14.5px;color:#26307a;font-weight:normal;font-family:'Liberation Sans';">Camtasia</div>
<div class="a" style="left:10px;top:93px;width:17px;height:16px;background:#fff;border:1px solid #b8bcc0;border-radius:3px"></div>
<svg class="a" style="left:46px;top:89px;" width="20" height="20" viewBox="0 0 20 20"><path d="M2.5 0.5H12.5L17.5 5.5V18.5H2.5Z" fill="#fff" stroke="#b8bcc0"/><path d="M12.5 0.5V5.5H17.5" fill="none" stroke="#b8bcc0"/><path d="M1.3 5.2L3.8 14L6.3 8.3L8.8 14L11.3 5.2" fill="none" stroke="#1d84bf" stroke-width="2.5" stroke-linejoin="round" stroke-linecap="round"/></svg>
<div class="t" style="left:74.0px;top:94.60px;font-size:14.5px;color:#26307a;font-weight:normal;font-family:'Liberation Sans';">Central Sand Hills Master Planning....</div>
<div class="t" style="left:330.5px;top:94.75px;font-size:14.0px;color:#333;font-weight:normal;font-family:'Liberation Sans';">14.6 KB</div>
<div class="a" style="left:10px;top:122px;width:17px;height:16px;background:#fff;border:1px solid #b8bcc0;border-radius:3px"></div>
<svg class="a" style="left:46px;top:118px;" width="20" height="20" viewBox="0 0 20 20"><path d="M2.5 0.5H12.5L17.5 5.5V18.5H2.5Z" fill="#fff" stroke="#b8bcc0"/><path d="M12.5 0.5V5.5H17.5" fill="none" stroke="#b8bcc0"/><path d="M1.3 5.2L3.8 14L6.3 8.3L8.8 14L11.3 5.2" fill="none" stroke="#1d84bf" stroke-width="2.5" stroke-linejoin="round" stroke-linecap="round"/></svg>
<div class="t" style="left:74.0px;top:123.60px;font-size:14.5px;color:#26307a;font-weight:normal;font-family:'Liberation Sans';">Circuit Breakers.docx</div>
<div class="t" style="left:330.5px;top:123.75px;font-size:14.0px;color:#333;font-weight:normal;font-family:'Liberation Sans';">18 KB</div>
<div class="a" style="left:10px;top:151px;width:17px;height:16px;background:#fff;border:1px solid #b8bcc0;border-radius:3px"></div>
<svg class="a" style="left:46px;top:147px;" width="20" height="20" viewBox="0 0 20 20"><path d="M2.5 0.5H12.5L17.5 5.5V18.5H2.5Z" fill="#fff" stroke="#b8bcc0"/><path d="M12.5 0.5V5.5H17.5" fill="none" stroke="#b8bcc0"/></svg>
<div class="t" style="left:74.0px;top:152.60px;font-size:14.5px;color:#26307a;font-weight:normal;font-family:'Liberation Sans';">COVID new cases.xlsx</div>
<div class="t" style="left:330.5px;top:152.75px;font-size:14.0px;color:#333;font-weight:normal;font-family:'Liberation Sans';">13.5 KB</div>
<div class="a" style="left:10px;top:180px;width:17px;height:16px;background:#fff;border:1px solid #b8bcc0;border-radius:3px"></div>
<svg class="a" style="left:46px;top:176px;" width="20" height="20" viewBox="0 0 20 20"><path d="M2.5 0.5H12.5L17.5 5.5V18.5H2.5Z" fill="#fff" stroke="#b8bcc0"/><path d="M12.5 0.5V5.5H17.5" fill="none" stroke="#b8bcc0"/></svg>
<div class="t" style="left:74.0px;top:181.60px;font-size:14.5px;color:#26307a;font-weight:normal;font-family:'Liberation Sans';">Curvature term.do</div>
<div class="t" style="left:330.5px;top:181.75px;font-size:14.0px;color:#333;font-weight:normal;font-family:'Liberation Sans';">1.2 KB</div>
<div class="a" style="left:10px;top:209px;width:17px;height:16px;background:#fff;border:1px solid #b8bcc0;border-radius:3px"></div>
<svg class="a" style="left:46px;top:206px;" width="20" height="18" viewBox="0 0 20 18"><defs><linearGradient id="fg2" x1="0" y1="0" x2="0" y2="1"><stop offset="0" stop-color="#f8e69a"/><stop offset="1" stop-color="#e5bd36"/></linearGradient></defs><path d="M1 3.5H9.5L11 1.2H17.3L18.5 3V16H1Z" fill="#f3ecd6" stroke="#a99a70" stroke-width="0.8"/><rect x="0.6" y="5" width="17.2" height="11.6" fill="url(#fg2)" stroke="#a8904c" stroke-width="0.8"/></svg>
<div class="t" style="left:74.0px;top:210.60px;font-size:14.5px;color:#26307a;font-weight:normal;font-family:'Liberation Sans';">Custom Office Templates</div>
<div class="a" style="left:10px;top:238px;width:17px;height:16px;background:#fff;border:1px solid #b8bcc0;border-radius:3px"></div>
<svg class="a" style="left:46px;top:234px;" width="20" height="20" viewBox="0 0 20 20"><path d="M2.5 0.5H12.5L17.5 5.5V18.5H2.5Z" fill="#fff" stroke="#b8bcc0"/><path d="M12.5 0.5V5.5H17.5" fill="none" stroke="#b8bcc0"/></svg>
<div class="t" style="left:74.0px;top:239.60px;font-size:14.5px;color:#26307a;font-weight:normal;font-family:'Liberation Sans';">Default.rdp</div>
<div class="t" style="left:330.5px;top:239.75px;font-size:14.0px;color:#333;font-weight:normal;font-family:'Liberation Sans';">2.3 KB</div>
<div class="a" style="left:10px;top:267px;width:17px;height:16px;background:#fff;border:1px solid #b8bcc0;border-radius:3px"></div>
<svg class="a" style="left:46px;top:263px;" width="20" height="20" viewBox="0 0 20 20"><path d="M2.5 0.5H12.5L17.5 5.5V18.5H2.5Z" fill="#fff" stroke="#b8bcc0"/><path d="M12.5 0.5V5.5H17.5" fill="none" stroke="#b8bcc0"/><polygon points="12.07,7.73 12.07,8.87 10.13,9.46 9.83,10.19 10.78,11.98 9.98,12.78 8.19,11.83 7.46,12.13 6.87,14.07 5.73,14.07 5.14,12.13 4.41,11.83 2.62,12.78 1.82,11.98 2.77,10.19 2.47,9.46 0.53,8.87 0.53,7.73 2.47,7.14 2.77,6.41 1.82,4.62 2.62,3.82 4.41,4.77 5.14,4.47 5.73,2.53 6.87,2.53 7.46,4.47 8.19,4.77 9.98,3.82 10.78,4.62 9.83,6.41 10.13,7.14" fill="#557b9e"/><circle cx="6.3" cy="8.3" r="1.9" fill="#e8f6fc"/></svg>
<div class="t" style="left:74.0px;top:268.60px;font-size:14.5px;color:#26307a;font-weight:normal;font-family:'Liberation Sans';">desktop.ini</div>
<div class="t" style="left:330.5px;top:268.75px;font-size:14.0px;color:#333;font-weight:normal;font-family:'Liberation Sans';">402 B</div>
<div class="a" style="left:10px;top:296px;width:17px;height:16px;background:#fff;border:1px solid #b8bcc0;border-radius:3px"></div>
<svg class="a" style="left:46px;top:292px;" width="20" height="20" viewBox="0 0 20 20"><rect x="0.5" y="0.5" width="18" height="18" fill="#fff" stroke="#a8b0b8"/><path d="M0.5 5H18.5M0.5 9.5H18.5M0.5 14H18.5M5 0.5V18.5M9.5 0.5V18.5M14 0.5V18.5" stroke="#c4ccd4"/></svg>
<div class="t" style="left:74.0px;top:297.60px;font-size:14.5px;color:#26307a;font-weight:normal;font-family:'Liberation Sans';">FIPS table.csv</div>
<div class="t" style="left:330.5px;top:297.75px;font-size:14.0px;color:#333;font-weight:normal;font-family:'Liberation Sans';">2.9 KB</div>
</div>
<div class="a" style="left:1136px;top:389px;width:16px;height:308px;background:rgba(241,241,241,0.66);"></div>
<div class="a" style="left:1137px;top:405px;width:13px;height:71px;background:rgba(187,187,187,0.73);"></div>
<svg class="a" style="left:1139px;top:394px;" width="9" height="6" viewBox="0 0 9 6"><path d="M0.5 5.5L4.5 1L8.5 5.5Z" fill="#c4c4c4"/></svg>
<svg class="a" style="left:1139px;top:684px;" width="9" height="6" viewBox="0 0 9 6"><path d="M0.5 0.5L4.5 5L8.5 0.5Z" fill="#a8a8a8"/></svg>
</body></html>
